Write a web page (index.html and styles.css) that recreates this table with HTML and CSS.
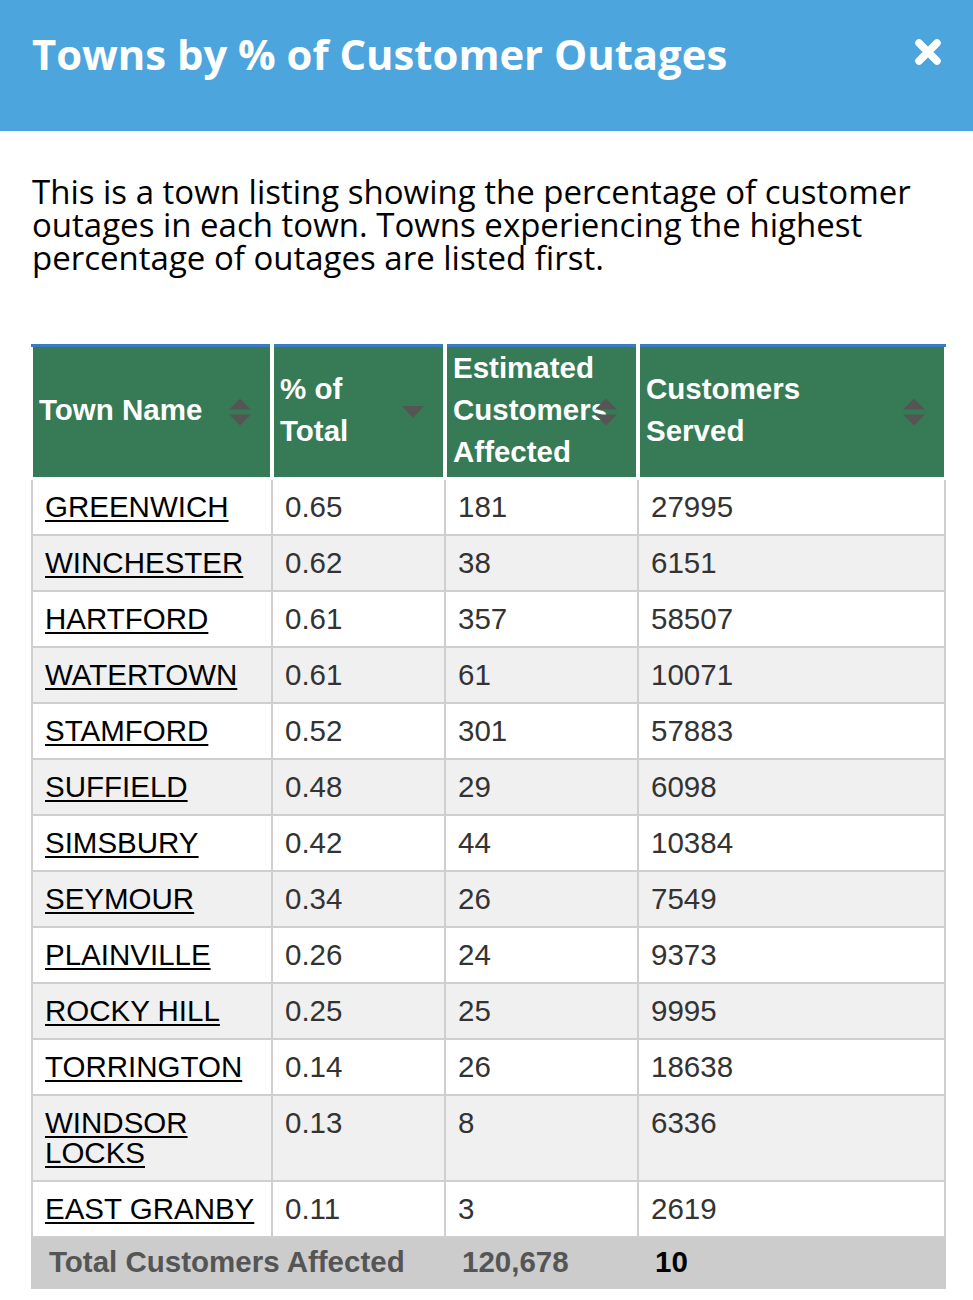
FILE: index.html
```html
<!DOCTYPE html>
<html lang="en">
<head>
<meta charset="utf-8">
<title>Towns by % of Customer Outages</title>
<link rel="stylesheet" href="styles.css">
</head>
<body>
<div class="modal">
  <header class="bar">
    <h1 class="title">Towns by % of Customer Outages</h1>
    <button class="close" aria-label="Close">
      <svg width="28" height="28" viewBox="0 0 28 28"><path d="M5 5 L23 23 M23 5 L5 23" stroke="#fff" stroke-width="7.5" stroke-linecap="round"/></svg>
    </button>
  </header>
  <div class="content">
    <p class="intro">This is a town listing showing the percentage of customer outages in each town. Towns experiencing the highest percentage of outages are listed first.</p>
    <table class="towns">
      <colgroup>
        <col class="c1"><col class="c2"><col class="c3"><col class="c4">
      </colgroup>
      <thead>
        <tr>
          <th>Town Name<svg class="sort" width="22" height="27" viewBox="0 0 22 27"><path d="M0 11 L11 0 L22 11 Z M0 16 L22 16 L11 27 Z"/></svg></th>
          <th>% of Total<svg class="sort" width="22" height="12" viewBox="0 0 22 12"><path d="M0 0 L22 0 L11 12 Z"/></svg></th>
          <th>Estimated Customers Affected<svg class="sort" width="22" height="27" viewBox="0 0 22 27"><path d="M0 11 L11 0 L22 11 Z M0 16 L22 16 L11 27 Z"/></svg></th>
          <th class="served">Customers Served<svg class="sort" width="22" height="27" viewBox="0 0 22 27"><path d="M0 11 L11 0 L22 11 Z M0 16 L22 16 L11 27 Z"/></svg></th>
        </tr>
      </thead>
      <tbody>
        <tr><td><a href="#">GREENWICH</a></td><td>0.65</td><td>181</td><td>27995</td></tr>
        <tr><td><a href="#">WINCHESTER</a></td><td>0.62</td><td>38</td><td>6151</td></tr>
        <tr><td><a href="#">HARTFORD</a></td><td>0.61</td><td>357</td><td>58507</td></tr>
        <tr><td><a href="#">WATERTOWN</a></td><td>0.61</td><td>61</td><td>10071</td></tr>
        <tr><td><a href="#">STAMFORD</a></td><td>0.52</td><td>301</td><td>57883</td></tr>
        <tr><td><a href="#">SUFFIELD</a></td><td>0.48</td><td>29</td><td>6098</td></tr>
        <tr><td><a href="#">SIMSBURY</a></td><td>0.42</td><td>44</td><td>10384</td></tr>
        <tr><td><a href="#">SEYMOUR</a></td><td>0.34</td><td>26</td><td>7549</td></tr>
        <tr><td><a href="#">PLAINVILLE</a></td><td>0.26</td><td>24</td><td>9373</td></tr>
        <tr><td><a href="#">ROCKY HILL</a></td><td>0.25</td><td>25</td><td>9995</td></tr>
        <tr><td><a href="#">TORRINGTON</a></td><td>0.14</td><td>26</td><td>18638</td></tr>
        <tr><td><a href="#">WINDSOR LOCKS</a></td><td>0.13</td><td>8</td><td>6336</td></tr>
        <tr><td><a href="#">EAST GRANBY</a></td><td>0.11</td><td>3</td><td>2619</td></tr>
      </tbody>
      <tfoot>
        <tr><td colspan="2">Total Customers Affected</td><td>120,678</td><td class="count">10</td></tr>
      </tfoot>
    </table>
  </div>
</div>
</body>
</html>
```

FILE: styles.css
```css
html, body {
  margin: 0;
  padding: 0;
  background: #fff;
}

.modal {
  width: 973px;
}

.bar {
  height: 131px;
  box-sizing: border-box;
  background: #4ca5dd;
  display: flex;
  justify-content: space-between;
  align-items: flex-start;
  padding: 33px 31px 0 32px;
}

.title {
  margin: 0;
  font-family: "Open Sans", sans-serif;
  font-weight: 700;
  font-size: 41.8px;
  line-height: 42px;
  color: #fff;
}

.close {
  margin: 5px 0 0 0;
  padding: 0;
  border: 0;
  background: none;
  width: 28px;
  height: 28px;
  display: block;
}

.close svg {
  display: block;
}

.content {
  padding: 44px 29px 0 32px;
}

.intro {
  margin: 0;
  font-family: "Open Sans", sans-serif;
  font-size: 33px;
  line-height: 33px;
  color: #000;
}

.towns {
  margin-top: 70px;
  margin-left: -1px;
  width: 913px;
  table-layout: fixed;
  border-collapse: collapse;
  font-family: "Liberation Sans", Arial, sans-serif;
  font-size: 29.5px;
}

.c1 { width: 240px; }
.c2 { width: 173px; }
.c3 { width: 193px; }
.c4 { width: 307px; }

.towns th {
  position: relative;
  background: #367b56;
  color: #fff;
  font-weight: 700;
  text-align: left;
  line-height: 42px;
  padding: 0 26px 4px 6px;
  border-top: 3px solid #3a7cc2;
  border-left: 4px solid #fff;
  border-right: 4px solid #fff;
  border-bottom: 3px solid #fff;
  vertical-align: middle;
}

.towns th:first-child {
  border-left-width: 2px;
}

.towns th:last-child {
  border-right-width: 2px;
}

.towns th.served {
  padding-right: 50px;
}

.sort {
  position: absolute;
  right: 19px;
  top: 50%;
  transform: translateY(-50%);
  fill: #555;
}

.towns td {
  padding: 12px 12px;
  line-height: 30px;
  color: #333;
  vertical-align: top;
  border: 2px solid #cfcfcf;
}

.towns tbody tr:first-child td {
  border-top: 0;
}

.towns tbody tr:nth-child(even) td {
  background: #f0f0f0;
}

.towns a {
  color: #000;
  text-decoration: underline;
  text-decoration-thickness: 2px;
  text-underline-offset: 3px;
}

.towns tfoot td {
  background: #cccccc;
  border-color: #cccccc;
  font-weight: 700;
  color: #555;
  padding: 9px 16px 10px 16px;
}

.towns tfoot td.count {
  color: #000;
}
```
